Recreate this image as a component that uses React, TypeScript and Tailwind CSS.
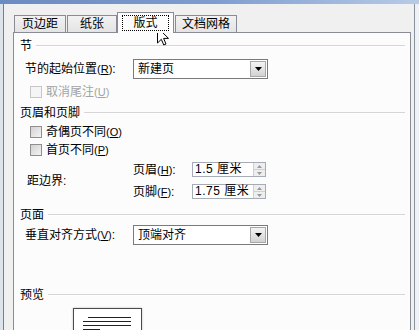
import React from 'react';

const font = "font-['Liberation_Sans','Noto_Sans_CJK_SC',sans-serif]";

function Key({ k }: { k: string }) {
  return (
    <span className="text-[11px]">
      (<span className="underline">{k}</span>)
    </span>
  );
}

function Heading({ title }: { title: string }) {
  return (
    <div className="flex items-center h-[16px]">
      <span>{title}</span>
      <div className="flex-1 ml-[4px] flex flex-col">
        <div className="h-px bg-[#d5d5d5]" />
        <div className="h-px bg-white" />
      </div>
    </div>
  );
}

function Check({ label, k, disabled }: { label: string; k: string; disabled?: boolean }) {
  return (
    <div className={`flex items-center h-[14px] pl-[10px] ${disabled ? 'text-[#a3a3a3]' : ''}`}>
      <span
        className={`w-[12px] h-[12px] border ${
          disabled ? 'border-[#c6c6c6] bg-[#f5f5f5]' : 'border-[#8e8f8f] bg-gradient-to-br from-[#d2d2d2] to-[#f4f4f4]'
        }`}
      />
      <span className="ml-[4px]">
        {label}
        <Key k={k} />
      </span>
    </div>
  );
}

function Select({ value }: { value: string }) {
  return (
    <div className="w-[135px] h-[20px] border border-[#7a7a7a] bg-white flex items-center">
      <span className="flex-1 pl-[4px]">{value}</span>
      <div className="w-[16px] h-[16px] mr-px border border-[#a8a8a8] bg-gradient-to-b from-[#f4f4f4] to-[#d2d2d2] flex items-center justify-center">
        <svg width="7" height="4" viewBox="0 0 7 4">
          <path d="M0 0h7L3.5 4z" fill="#000" />
        </svg>
      </div>
    </div>
  );
}

function Spin({ value }: { value: string }) {
  return (
    <div className="w-[74px] h-[15px] border border-[#a5acb5] bg-white flex">
      <span className="flex-1 pl-[2px] leading-[13px] tracking-[0.5px]">{value}</span>
      <div className="w-[12px] flex flex-col border-l border-[#d0d0d0] bg-[#eeeeee]">
        <div className="flex-1 flex items-center justify-center border-b border-[#d0d0d0]">
          <svg width="5" height="3" viewBox="0 0 5 3">
            <path d="M0 3h5L2.5 0z" fill="#9a9a9a" />
          </svg>
        </div>
        <div className="flex-1 flex items-center justify-center">
          <svg width="5" height="3" viewBox="0 0 5 3">
            <path d="M0 0h5L2.5 3z" fill="#9a9a9a" />
          </svg>
        </div>
      </div>
    </div>
  );
}

function Tab({ label, w, active }: { label: string; w: string; active?: boolean }) {
  if (active) {
    return (
      <div className={`${w} h-[21px] -mb-px relative z-10 bg-[#fcfcfc] border border-b-0 border-[#898c95] flex items-center justify-center`}>
        <span className="border border-dotted border-black px-[10px] leading-[14px]">{label}</span>
      </div>
    );
  }
  return (
    <div className={`${w} h-[17px] border border-b-0 border-[#898c95] bg-gradient-to-b from-[#f2f2f2] to-[#e4e4e4] flex items-center justify-center`}>
      {label}
    </div>
  );
}

export default function App() {
  return (
    <div className={`w-[419px] h-[330px] overflow-hidden relative bg-[#f0f0f0] text-[12px] text-black leading-none ${font}`}>
      <div className="h-[4px] bg-gradient-to-r from-[#6b8cc2] via-[#7d9ccf] to-[#b7cbe6]" />
      <div className="flex h-[326px]">
        <div className="w-[4px] bg-[#dde3ea] border-r border-[#75808c]" />
        <div className="flex-1 pl-[9px] pr-[3px] pt-[8px] flex flex-col">
          {/* tabs */}
          <div className="flex items-end h-[20px] pl-px">
            <Tab label="页边距" w="w-[52px]" />
            <div className="w-px" />
            <Tab label="纸张" w="w-[50px]" />
            <Tab label="版式" w="w-[57px]" active />
            <div className="w-px" />
            <Tab label="文档网格" w="w-[62px]" />
          </div>

          {/* panel */}
          <div className="flex-1 bg-[#fcfcfc] border border-b-0 border-[#898c95] pl-[6px] pr-[5px] flex flex-col">
            <div className="mt-[5px]">
              <Heading title="节" />
            </div>
            <div className="mt-[5px] flex items-center pl-[5px]">
              <span className="w-[108px]">
                节的起始位置<Key k="R" />:
              </span>
              <Select value="新建页" />
            </div>
            <div className="mt-[6px]">
              <Check label="取消尾注" k="U" disabled />
            </div>

            <div className="mt-[6px]">
              <Heading title="页眉和页脚" />
            </div>
            <div className="mt-[4px]">
              <Check label="奇偶页不同" k="O" />
            </div>
            <div className="mt-[4px]">
              <Check label="首页不同" k="P" />
            </div>
            <div className="mt-[5px] flex items-center pl-[7px]">
              <span className="w-[106px]">距边界:</span>
              <div className="flex flex-col gap-[7px]">
                <div className="flex items-center">
                  <span className="w-[59px]">
                    页眉<Key k="H" />:
                  </span>
                  <Spin value="1.5 厘米" />
                </div>
                <div className="flex items-center">
                  <span className="w-[59px]">
                    页脚<Key k="F" />:
                  </span>
                  <Spin value="1.75 厘米" />
                </div>
              </div>
            </div>

            <div className="mt-[8px]">
              <Heading title="页面" />
            </div>
            <div className="mt-[2px] flex items-center pl-[5px]">
              <span className="w-[108px]">
                垂直对齐方式<Key k="V" />:
              </span>
              <Select value="顶端对齐" />
            </div>

            <div className="mt-[42px]">
              <Heading title="预览" />
            </div>
            <div className="mt-[5px] ml-[53px] w-[69px] h-[40px] bg-white border border-[#4a4a4a] shadow-[0_0_2px_#bbbbbb] pt-[8px] pl-[9px] pr-[10px] flex flex-col gap-[3px]">
              <div className="h-px bg-[#222] ml-[5px]" />
              <div className="h-px bg-[#222]" />
              <div className="h-px bg-[#222]" />
              <div className="h-px bg-[#222] w-[17px]" />
            </div>
          </div>
        </div>
        <div className="w-[5px] bg-[#eef1f5] border-l border-[#8a939c]" />
      </div>

      {/* mouse cursor */}
      <svg className="absolute left-[157px] top-[27px]" width="12" height="19" viewBox="0 0 12 19">
        <path d="M0.5 0.5 V16 L4.3 12.3 L6.8 18 L9 17 L6.6 11.4 H11.5 Z" fill="#fff" stroke="#000" strokeWidth="1" strokeLinejoin="miter" />
      </svg>
    </div>
  );
}
